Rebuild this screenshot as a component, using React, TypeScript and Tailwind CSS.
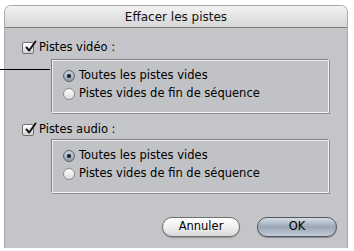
import React from 'react';

const font = { fontFamily: '"Lucida Grande", "DejaVu Sans", sans-serif' };

function Checkbox() {
  return (
    <span className="relative flex h-[12px] w-[12px] shrink-0 items-center justify-center rounded-[2px] border border-[#6e6e6e] bg-gradient-to-b from-[#ffffff] to-[#d4d4d4]">
      <svg width="13" height="13" viewBox="0 0 13 13" className="absolute -top-[3px] left-[1px]">
        <path d="M2.5 7.5 L5.2 10.5 L11.5 1.5" fill="none" stroke="#111" strokeWidth="1.9" strokeLinecap="round" strokeLinejoin="round" />
      </svg>
    </span>
  );
}

function Radio({ on }: { on?: boolean }) {
  return (
    <span
      className={
        'flex h-[12px] w-[12px] shrink-0 items-center justify-center rounded-full border ' +
        (on
          ? 'border-[#5c6470] bg-gradient-to-b from-[#c9d2dc] to-[#8e9bab]'
          : 'border-[#8a8a8a] bg-gradient-to-b from-[#ffffff] to-[#dcdcdc]')
      }
    >
      {on && <span className="h-[4px] w-[4px] rounded-full bg-[#1a1a1a]" />}
    </span>
  );
}

function Group({ rows }: { rows: string[] }) {
  return (
    <div className="ml-[46px] mr-[18px] flex h-[54px] flex-col border border-t-[#7f8083] border-l-[#7f8083] border-r-[#f4f4f4] border-b-[#f4f4f4] bg-[#c1c2c5] pt-[7px] pl-[11px] shadow-[inset_1px_1px_0_#eeeeee,1px_1px_0_#8e8f92]">
      {rows.map((r, i) => (
        <div key={r} className="flex h-[18px] items-center gap-[4px] text-[11.5px] text-black">
          <Radio on={i === 0} />
          <span>{r}</span>
        </div>
      ))}
    </div>
  );
}

function CheckRow({ label }: { label: string }) {
  return (
    <div className="ml-[17px] flex h-[14px] items-center gap-[5px] text-[11.5px] text-black">
      <Checkbox />
      <span>{label}</span>
    </div>
  );
}

export default function App() {
  const rows = ['Toutes les pistes vides', 'Pistes vides de fin de séquence'];
  return (
    <div className="relative h-[251px] w-[354px] overflow-hidden bg-white pl-[4px] pt-[5px]" style={font}>
      <div className="flex h-[243px] w-[344px] flex-col overflow-hidden rounded-t-[7px] border border-b-0 border-[#a9a9a9]">
        {/* title bar */}
        <div className="flex h-[22px] shrink-0 items-center justify-center border-b border-[#7c7c7c] bg-gradient-to-b from-[#f2f2f2] to-[#d6d6d6] text-[12px] text-[#111]">
          Effacer les pistes
        </div>

        <div className="flex flex-1 flex-col bg-[#c4c5c8]">
          <div className="mt-[13px]">
            <CheckRow label="Pistes vidéo :" />
          </div>
          <div className="mt-[4px]">
            <Group rows={rows} />
          </div>
          <div className="mt-[10px]">
            <CheckRow label="Pistes audio :" />
          </div>
          <div className="mt-[2px]">
            <Group rows={rows} />
          </div>

          <div className="mr-[10px] mt-[24px] flex justify-end gap-[17px]">
            <button className="flex h-[20px] w-[78px] items-center justify-center rounded-full border border-[#6f6f6f] bg-gradient-to-b from-[#ffffff] via-[#f0f0f0] to-[#d9d9d9] text-[11.5px] text-black shadow-[0_1px_1px_rgba(0,0,0,0.25)]">
              Annuler
            </button>
            <button className="flex h-[20px] w-[80px] items-center justify-center rounded-full border border-[#4f5560] bg-gradient-to-b from-[#d6dde6] via-[#9aa6b5] to-[#c3ccd7] text-[11.5px] text-black shadow-[0_1px_1px_rgba(0,0,0,0.3)]">
              OK
            </button>
          </div>
        </div>
      </div>

      {/* callout line */}
      <div className="absolute left-0 top-[69px] h-px w-[50px] bg-black" />
    </div>
  );
}
